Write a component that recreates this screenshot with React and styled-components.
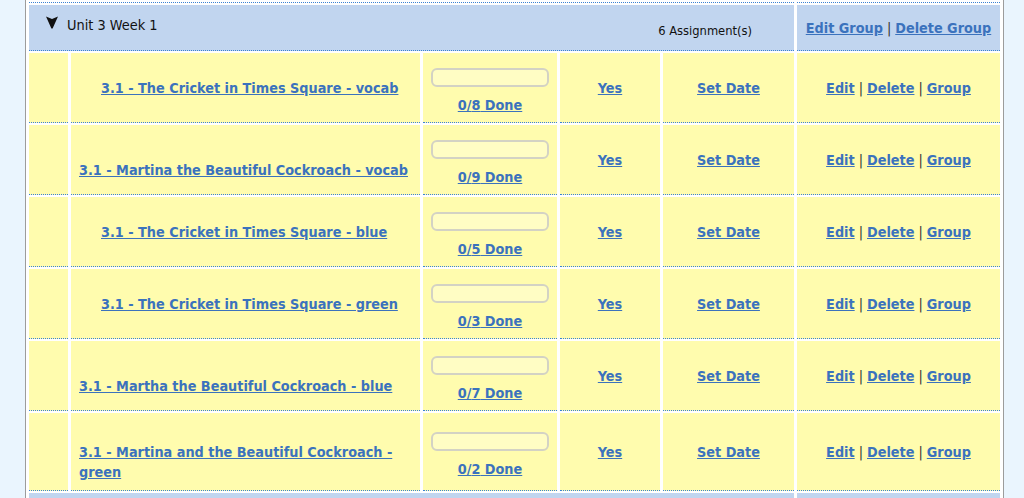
import React from 'react';
import styled, { createGlobalStyle } from 'styled-components';

const assignments = [
  { title: '3.1 - The Cricket in Times Square - vocab', total: 8 },
  { title: '3.1 - Martina the Beautiful Cockroach - vocab', total: 9, drop: true },
  { title: '3.1 - The Cricket in Times Square - blue', total: 5 },
  { title: '3.1 - The Cricket in Times Square - green', total: 3 },
  { title: '3.1 - Martha the Beautiful Cockroach - blue', total: 7, drop: true },
  { title: ['3.1 - Martina and the Beautiful Cockroach -', 'green'], total: 2, drop: true },
];

function Toggle() {
  return (
    <svg width="12" height="13" viewBox="0 0 12 13">
      <path d="M0 0.5 L6 3 L12 0.5 L6.6 12.5 L5.4 12.5 Z" fill="#111" />
    </svg>
  );
}

function Actions({ items }) {
  return (
    <Links>
      {items.map((item, i) => (
        <React.Fragment key={item}>
          {i > 0 && <Pipe>|</Pipe>}
          <A href="#">{item}</A>
        </React.Fragment>
      ))}
    </Links>
  );
}

export default function App() {
  return (
    <>
      <GlobalStyle />
      <Frame>
        <Grid>
          <Cell $span="1 / 6" $h={3} />
          <Cell $h={3} />

          <HeadMain>
            <Toggle />
            <GroupName>Unit 3 Week 1</GroupName>
            <Count>6 Assignment(s)</Count>
          </HeadMain>
          <HeadActions>
            <Actions items={['Edit Group', 'Delete Group']} />
          </HeadActions>

          {assignments.map((a, i) => (
            <React.Fragment key={i}>
              <Cell $bg="#fffcae" $h={70} />
              <TitleCell>
                <Title>
                  <Spacer />
                  <TitleLink href="#" $drop={a.drop}>
                    {Array.isArray(a.title) ? (
                      <>
                        {a.title[0]}
                        <br />
                        {a.title[1]}
                      </>
                    ) : (
                      a.title
                    )}
                  </TitleLink>
                </Title>
              </TitleCell>
              <ProgressCell>
                <Bar />
                <A href="#">0/{a.total} Done</A>
              </ProgressCell>
              <CenterCell>
                <A href="#">Yes</A>
              </CenterCell>
              <CenterCell>
                <A href="#">Set Date</A>
              </CenterCell>
              <CenterCell>
                <Actions items={['Edit', 'Delete', 'Group']} />
              </CenterCell>
            </React.Fragment>
          ))}

          <Cell $span="1 / 6" $bg="#c1d5ef" $h={46} />
          <Cell $bg="#c1d5ef" $h={46} />
        </Grid>
      </Frame>
    </>
  );
}

const GlobalStyle = createGlobalStyle`
  body {
    margin: 0;
    background: #eaf5fe;
    font-family: "DejaVu Sans Condensed", "DejaVu Sans", sans-serif;
    font-size: 14px;
    color: #111;
  }
`;

const Frame = styled.div`
  margin-left: 25px;
  width: 979px;
  height: 498px;
  overflow: hidden;
  box-sizing: border-box;
  padding: 0 2px 0 3px;
  background: #fff;
  border-left: 1px solid #9c9c9c;
  border-right: 1px solid #9c9c9c;
`;

const Grid = styled.div`
  display: grid;
  grid-template-columns: 39px 349px 134px 100px 131px 203px;
  column-gap: 3px;
  row-gap: 2px;
`;

const Cell = styled.div`
  box-sizing: border-box;
  grid-column: ${(p) => p.$span || 'auto'};
  min-height: ${(p) => p.$h || 0}px;
  background: ${(p) => p.$bg || 'transparent'};
  border-bottom: 1px dotted #3a82d4;
`;

const HeadMain = styled(Cell).attrs({ $span: '1 / 6', $bg: '#c1d5ef', $h: 46 })`
  display: flex;
  align-items: flex-start;
  padding: 11px 42px 0 17px;
`;

const GroupName = styled.span`
  margin: 1px 0 0 9px;
  line-height: 16px;
  font-size: 14.4px;
`;

const Count = styled.span`
  margin: 7px 0 0 auto;
  line-height: 16px;
  font-size: 12.8px;
`;

const HeadActions = styled(Cell).attrs({ $bg: '#c1d5ef', $h: 46 })`
  display: flex;
  align-items: center;
  justify-content: center;
`;

const TitleCell = styled(Cell).attrs({ $bg: '#fffcae', $h: 70 })`
  display: flex;
  align-items: center;
  padding: 9px 8px 8px;
`;

const Title = styled.div`
  line-height: 20px;
`;

const Spacer = styled.span`
  display: inline-block;
  width: 22px;
  height: 1px;
`;

const ProgressCell = styled(Cell).attrs({ $bg: '#fffcae', $h: 70 })`
  display: flex;
  flex-direction: column;
  align-items: center;
  justify-content: center;
  padding-top: 7px;
  line-height: 18px;
`;

const Bar = styled.div`
  box-sizing: border-box;
  width: 118px;
  height: 19px;
  margin-bottom: 9px;
  border: 2px solid #d3d2c4;
  border-radius: 6px;
  background: #fffdc4;
`;

const CenterCell = styled(Cell).attrs({ $bg: '#fffcae', $h: 70 })`
  display: flex;
  align-items: center;
  justify-content: center;
`;

const A = styled.a`
  color: #3b72bd;
  font-weight: bold;
  font-size: 14.3px;
  text-decoration: underline;
`;

const TitleLink = styled(A)`
  display: ${(p) => (p.$drop ? 'block' : 'inline')};
`;

const Links = styled.span`
  white-space: nowrap;
`;

const Pipe = styled.span`
  margin: 0 4px;
  color: #333;
  font-size: 14.3px;
`;
